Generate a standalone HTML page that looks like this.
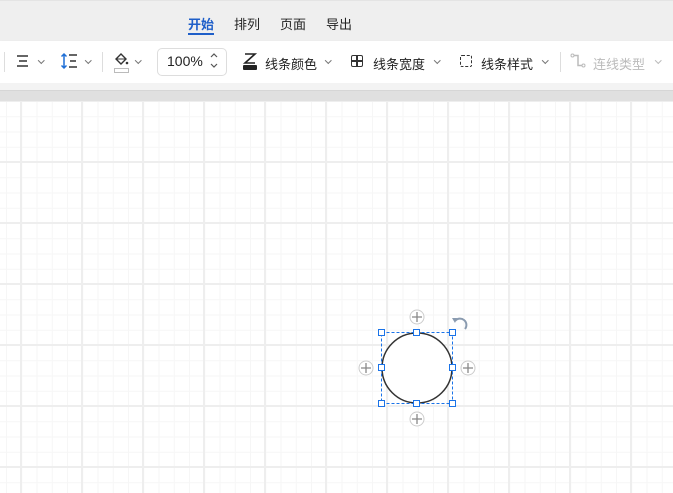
<html><head><style>
body{margin:0;width:673px;height:493px;overflow:hidden;font-family:"Liberation Sans","Noto Sans CJK SC",sans-serif;position:relative;background:#fff}
.hdr{position:absolute;left:0;top:0;width:673px;height:40px;background:#efefef;border-top:1px solid #e4e4e4}
.tab{position:absolute;top:13px;font-size:13px;color:#222}
.tb{position:absolute;left:0;top:41px;width:673px;height:42px;background:#fff;box-shadow:0 1px 2px #ddd}
.t{position:absolute;top:13px;font-size:13px;color:#222}
.chev{position:absolute;top:17px;width:3.5px;height:3.5px;border-right:1.2px solid #777;border-bottom:1.2px solid #777;transform:rotate(45deg)}
.sep{position:absolute;top:11px;width:1px;height:20px;background:#ddd}
.band1{position:absolute;left:0;top:83px;width:673px;height:7px;background:#f3f3f3}
.band2{position:absolute;left:0;top:90px;width:673px;height:11px;background:#e0e0e0;border-top:1px solid #d6d6d6}
.grid{position:absolute;left:0;top:101px;width:673px;height:392px;
background-image:linear-gradient(#eeeeee 2px,transparent 2px),linear-gradient(90deg,#eeeeee 2px,transparent 2px),linear-gradient(#f6f6f6 1px,transparent 1px),linear-gradient(90deg,#f6f6f6 1px,transparent 1px);
background-size:61px 61px,61px 61px,15.25px 15.25px,15.25px 15.25px;
background-position:0 -1px,20px 0,0 0,6px 0}
</style></head><body>
<div class="hdr">
<div class="tab" style="left:188px;color:#1f5fc9;font-weight:bold">开始</div>
<div style="position:absolute;left:188px;top:32px;width:26px;height:2px;background:#1f5fc9"></div>
<div class="tab" style="left:234px">排列</div>
<div class="tab" style="left:280px">页面</div>
<div class="tab" style="left:326px">导出</div>
</div>
<div class="tb">
<div class="sep" style="left:4px"></div>
<svg style="position:absolute;left:16px;top:13px" width="14" height="14"><path d="M1 2h11M3 7h8M1 12h11" stroke="#333" stroke-width="1.5"/></svg>
<div class="chev" style="left:39px"></div>
<svg style="position:absolute;left:60px;top:11px" width="20" height="18"><path d="M4 2v14M1.5 4.5L4 2l2.5 2.5M1.5 13.5L4 16l2.5-2.5" stroke="#1f6fd6" stroke-width="1.5" fill="none"/><path d="M9 3h8M10 9h6M9 15h8" stroke="#333" stroke-width="1.5"/></svg>
<div class="chev" style="left:86px"></div>
<div class="sep" style="left:102px"></div>
<svg style="position:absolute;left:113px;top:11px" width="16" height="14"><path d="M3 7l5-5 5 5-5 5z" fill="none" stroke="#333" stroke-width="1.4"/><path d="M3 7h10" stroke="#333"/><circle cx="14" cy="11" r="1.3" fill="#333"/></svg>
<div style="position:absolute;left:114px;top:27px;width:13px;height:3px;border:1px solid #bbb"></div>
<div class="chev" style="left:136px"></div>
<div style="position:absolute;left:157px;top:7px;width:68px;height:26px;border:1px solid #ddd;border-radius:5px"></div>
<div class="t" style="left:167px;font-size:14px;top:12px">100%</div>
<svg style="position:absolute;left:209px;top:11px" width="10" height="18"><path d="M2 5l3-3 3 3M2 12l3 3 3-3" stroke="#555" stroke-width="1.2" fill="none"/></svg>
<svg style="position:absolute;left:242px;top:10px" width="16" height="20"><path d="M3 3h10L3 12h10" stroke="#222" stroke-width="1.6" fill="none"/><rect x="1" y="14" width="14" height="5" rx="1" fill="#222"/></svg>
<div class="t" style="left:265px">线条颜色</div>
<div class="chev" style="left:326px"></div>
<div style="position:absolute;left:351px;top:14px;width:10px;height:10px;border:1.5px solid #333;border-radius:2px;background:linear-gradient(#333,#333) center/2px 100% no-repeat,linear-gradient(#333,#333) center/100% 2px no-repeat"></div>
<div class="t" style="left:373px">线条宽度</div>
<div class="chev" style="left:435px"></div>
<div style="position:absolute;left:460px;top:14px;width:10px;height:10px;border:1.5px dashed #333;border-radius:2px"></div>
<div class="t" style="left:481px">线条样式</div>
<div class="chev" style="left:543px"></div>
<div class="sep" style="left:560px"></div>
<svg style="position:absolute;left:570px;top:12px" width="16" height="16"><circle cx="2.5" cy="2.5" r="1.5" fill="none" stroke="#bbb"/><path d="M4 2.5h4v10h4" stroke="#bbb" stroke-width="1.5" fill="none"/><circle cx="13.5" cy="12.5" r="1.5" fill="none" stroke="#bbb"/></svg>
<div class="t" style="left:593px;color:#bbb">连线类型</div>
<div class="chev" style="left:656px;border-color:#bbb"></div>
</div>
<div class="band1"></div><div class="band2"></div>
<div class="grid"></div>
<svg style="position:absolute;left:0;top:0" width="673" height="493">
<g fill="#fff" stroke="#ccc"><circle cx="417" cy="317" r="7"/><circle cx="417" cy="419" r="7"/><circle cx="366" cy="368" r="7"/><circle cx="468" cy="368" r="7"/></g>
<g stroke="#888" stroke-width="1.3"><path d="M417 312v10M412 317h10M417 414v10M412 419h10M366 363v10M361 368h10M468 363v10M463 368h10"/></g>
<path d="M455 321a6 6 0 0 1 10 8" fill="none" stroke="#8a9bb0" stroke-width="2"/><path d="M452 318l5 0l-2 5z" fill="#8a9bb0"/>
<circle cx="417" cy="368" r="35" fill="#fff" stroke="#333" stroke-width="1.5"/>
<rect x="381.5" y="332.5" width="71" height="71" fill="none" stroke="#1a73e8" stroke-dasharray="3 2"/>
<g fill="#fff" stroke="#1a73e8"><rect x="378.5" y="329.5" width="6" height="6"/><rect x="413.5" y="329.5" width="6" height="6"/><rect x="449.5" y="329.5" width="6" height="6"/><rect x="378.5" y="364.5" width="6" height="6"/><rect x="449.5" y="364.5" width="6" height="6"/><rect x="378.5" y="400.5" width="6" height="6"/><rect x="413.5" y="400.5" width="6" height="6"/><rect x="449.5" y="400.5" width="6" height="6"/></g>
</svg>
</body></html>
